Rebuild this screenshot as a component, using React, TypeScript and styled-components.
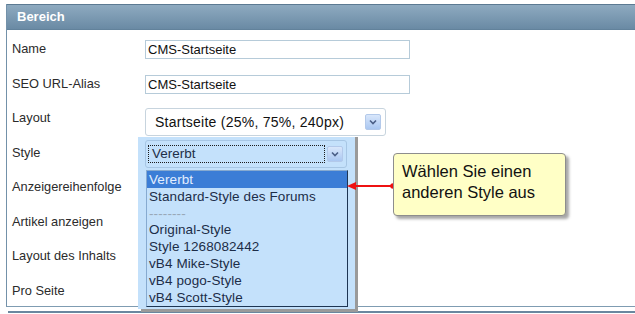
import React from 'react';
import styled, { createGlobalStyle } from 'styled-components';

const GlobalStyle = createGlobalStyle`
  html, body {
    margin: 0;
    padding: 0;
    background: #ffffff;
    overflow: hidden;
  }
  body {
    font-family: "Liberation Sans", Arial, sans-serif;
  }
`;

const Page = styled.div`
  position: relative;
  width: 635px;
  height: 314px;
  padding: 4px 0 0 6px;
  box-sizing: border-box;
  overflow: hidden;
`;

const Panel = styled.div`
  width: 640px;
  border-left: 1px solid #7391a9;
  border-bottom: 1px solid #7f9cb2;
`;

const Header = styled.div`
  height: 24px;
  line-height: 24px;
  border-top: 1px solid #5c7a92;
  border-bottom: 1px solid #62829b;
  background: linear-gradient(#8eaac0, #6a8aa4);
  color: #ffffff;
  font-weight: bold;
  font-size: 13px;
  padding-left: 10px;
`;

const Form = styled.div`
  display: flex;
  flex-direction: column;
`;

const Row = styled.div`
  display: grid;
  grid-template-columns: 138px 1fr;
  height: 34.5px;
`;

const Label = styled.div`
  padding: 12px 0 0 5px;
  font-size: 12.8px;
  line-height: 14px;
  color: #2b2b2b;
`;

const Cell = styled.div<{ $top: number }>`
  padding-top: ${(p) => p.$top}px;
`;

const TextInput = styled.div`
  width: 265px;
  height: 19px;
  box-sizing: border-box;
  border: 1px solid #b6cbd9;
  padding-left: 2px;
  font-size: 13px;
  line-height: 17px;
  color: #111;
`;

const Select = styled.div`
  width: 241px;
  height: 28px;
  box-sizing: border-box;
  border: 1px solid #c7d4de;
  border-radius: 3px;
  display: flex;
  align-items: center;
  justify-content: space-between;
  padding: 0 4px 0 9px;
  font-size: 14px;
  letter-spacing: 0.25px;
  color: #111;
  background: #fff;
`;

const ArrowBtn = styled.div`
  width: 16px;
  height: 16px;
  box-sizing: border-box;
  border: 1px solid #b3c9ea;
  border-radius: 2px;
  background: linear-gradient(#d9e7fb, #aac7f1);
  display: flex;
  align-items: center;
  justify-content: center;
`;

const Chevron = () => (
  <svg width="8" height="6" viewBox="0 0 8 6">
    <path d="M1 1.5 L4 4.5 L7 1.5" fill="none" stroke="#4b5f86" strokeWidth="1.6" />
  </svg>
);

const Footer = styled.div`
  margin: 4px 0 0 2px;
  border-top: 2px solid #6a879f;
`;

/* open combobox drawn over the form */
const DropLayer = styled.div`
  position: absolute;
  left: 138px;
  top: 137px;
  width: 217px;
  height: 172px;
  background: #c4e1fb;
  box-shadow: 3px 0 0 #9a9a9a, 3px 3px 0 #9a9a9a;
`;

const Combo = styled.div`
  position: absolute;
  left: 7px;
  top: 3px;
  width: 202px;
  height: 28px;
  box-sizing: border-box;
  border: 1px solid #a7c6e4;
  border-radius: 3px;
  display: flex;
  align-items: center;
  padding-left: 2px;
  gap: 2px;
`;

const Focus = styled.div`
  width: 177px;
  height: 18px;
  box-sizing: border-box;
  border: 1px dotted #1b1b1b;
  padding-left: 3px;
  font-size: 13.5px;
  line-height: 16px;
  color: #1e2f48;
`;

const ListBox = styled.div`
  position: absolute;
  left: 8px;
  top: 33px;
  width: 202px;
  height: 137px;
  box-sizing: border-box;
  border: 1px solid;
  border-color: #86aad0 #1d3553 #1d3553 #86aad0;
`;

const Item = styled.div<{ $active?: boolean; $muted?: boolean }>`
  height: 16.8px;
  line-height: 17px;
  padding-left: 2px;
  font-size: 13.5px;
  letter-spacing: 0.1px;
  white-space: nowrap;
  background: ${(p) => (p.$active ? '#3b7dd6' : 'transparent')};
  color: ${(p) => (p.$active ? '#e2eeff' : p.$muted ? '#98a8b8' : '#1c2d48')};
`;

const Callout = styled.div`
  position: absolute;
  left: 393px;
  top: 153px;
  width: 173px;
  height: 63px;
  box-sizing: border-box;
  background: #ffffc6;
  border: 1px solid #8d8d8d;
  border-radius: 4px;
  box-shadow: 3px 3px 3px rgba(0, 0, 0, 0.35);
  padding: 7px 0 0 8px;
  font-size: 16.5px;
  line-height: 21px;
  color: #111;
`;

const Pointer = styled.svg`
  position: absolute;
  left: 344px;
  top: 180px;
`;

const items = [
  'Vererbt',
  'Standard-Style des Forums',
  '--------',
  'Original-Style',
  'Style 1268082442',
  'vB4 Mike-Style',
  'vB4 pogo-Style',
  'vB4 Scott-Style',
];

const labels = [
  'Name',
  'SEO URL-Alias',
  'Layout',
  'Style',
  'Anzeigereihenfolge',
  'Artikel anzeigen',
  'Layout des Inhalts',
  'Pro Seite',
];

export default function App() {
  const control = (i: number) => {
    if (i === 0) return <Cell $top={10}><TextInput>CMS-Startseite</TextInput></Cell>;
    if (i === 1) return <Cell $top={10.5}><TextInput>CMS-Startseite</TextInput></Cell>;
    if (i === 2)
      return (
        <Cell $top={9}>
          <Select>
            Startseite (25%, 75%, 240px)
            <ArrowBtn><Chevron /></ArrowBtn>
          </Select>
        </Cell>
      );
    return <Cell $top={0} />;
  };

  return (
    <>
      <GlobalStyle />
      <Page>
        <Panel>
          <Header>Bereich</Header>
          <Form>
            {labels.map((l, i) => (
              <Row key={l}>
                <Label>{l}</Label>
                {control(i)}
              </Row>
            ))}
          </Form>
        </Panel>
        <Footer />

        <DropLayer>
          <Combo>
            <Focus>Vererbt</Focus>
            <ArrowBtn><Chevron /></ArrowBtn>
          </Combo>
          <ListBox>
            {items.map((it, i) => (
              <Item key={it} $active={i === 0} $muted={i === 2}>{it}</Item>
            ))}
          </ListBox>
        </DropLayer>

        <Pointer width="54" height="12" viewBox="0 0 54 12">
          <line x1="10" y1="6" x2="49" y2="6" stroke="#ee1111" strokeWidth="2" />
          <path d="M3 6 L12 2 L12 10 Z" fill="#ee1111" />
          <circle cx="49" cy="6" r="2.8" fill="#ee1111" />
        </Pointer>

        <Callout>
          Wählen Sie einen
          <br />
          anderen Style aus
        </Callout>
      </Page>
    </>
  );
}
